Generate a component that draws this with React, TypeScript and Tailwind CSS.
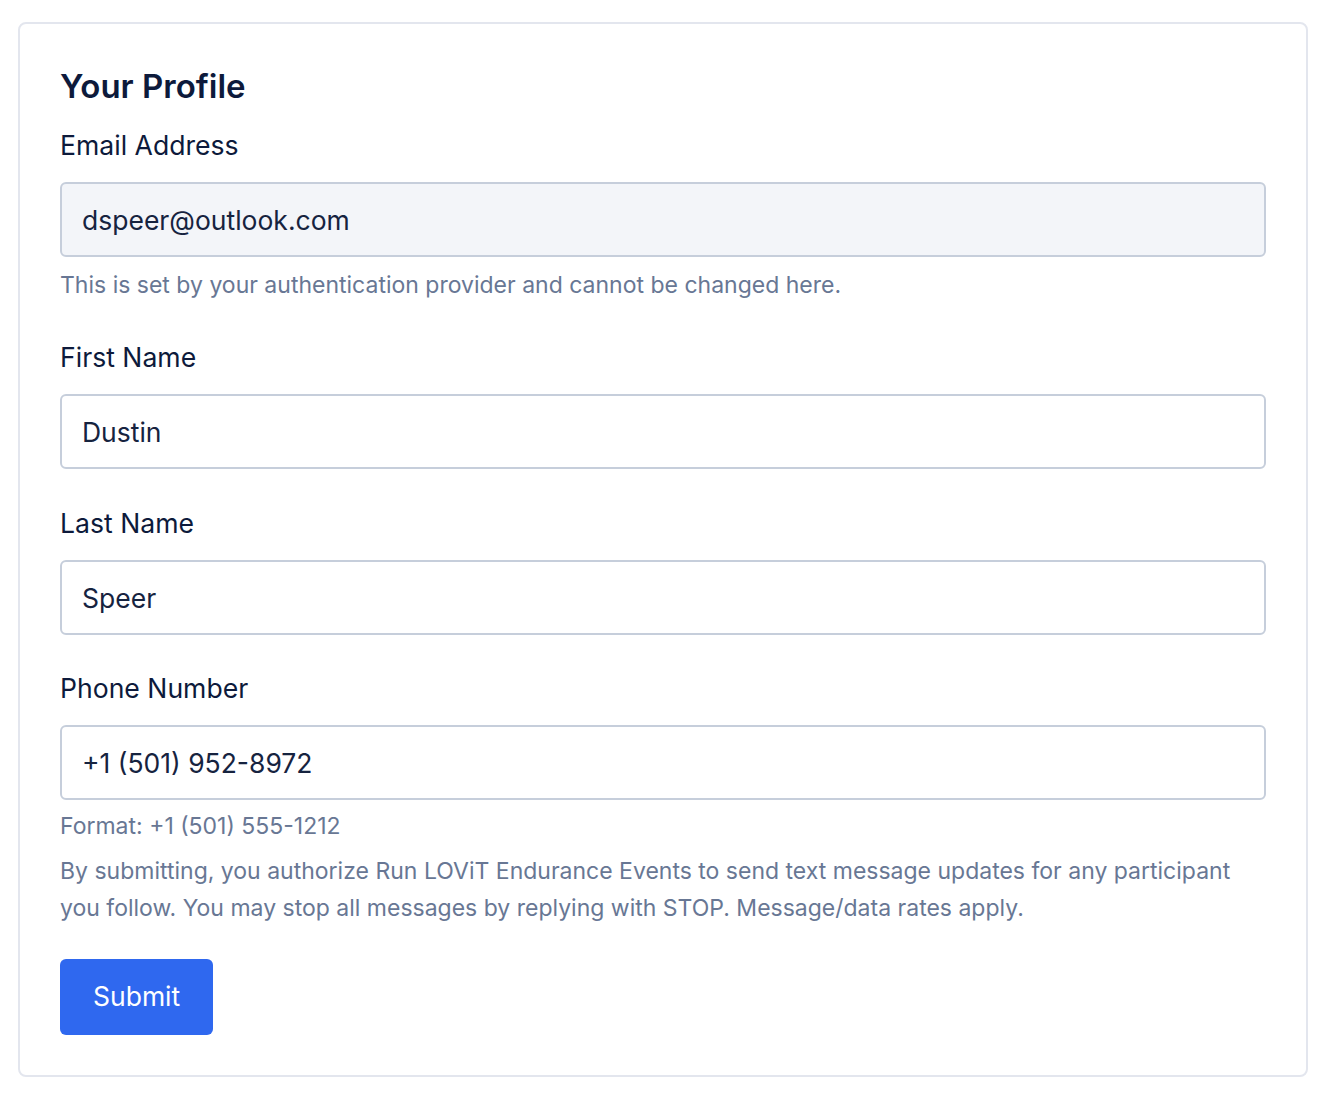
import React from "react";

const font = { fontFamily: "Inter, 'Noto Sans', sans-serif" };

function Field({ label, value, disabled }: { label: string; value: string; disabled?: boolean }) {
  return (
    <div className="flex flex-col">
      <label className="text-[26.6px] leading-[38px] text-[#0d1a3b]">{label}</label>
      <input
        readOnly
        value={value}
        className={`mt-[18px] h-[75px] w-full rounded-[6px] border-2 border-[#c6cedb] px-[20px] text-[26.5px] text-[#16233f] outline-none ${disabled ? "bg-[#f3f5f9]" : "bg-white"}`}
        style={font}
      />
    </div>
  );
}

export default function App() {
  return (
    <div className="min-h-[1104px] bg-white pt-[22px] pl-[18px] pr-[20px]" style={font}>
      <div className="rounded-[8px] border-2 border-[#e3e6ee] bg-white px-[40px] pt-[40px] pb-[40px]">
        <h1 className="text-[33px] leading-[44px] font-semibold text-[#0d1a3b]">Your Profile</h1>
        <div className="mt-[18px]">
          <Field label="Email Address" value="dspeer@outlook.com" disabled />
          <p className="mt-[11px] text-[23px] leading-[34px] text-[#687794]">
            This is set by your authentication provider and cannot be changed here.
          </p>
        </div>
        <div className="mt-[36px]">
          <Field label="First Name" value="Dustin" />
        </div>
        <div className="mt-[35px]">
          <Field label="Last Name" value="Speer" />
        </div>
        <div className="mt-[34px]">
          <Field label="Phone Number" value="+1 (501) 952-8972" />
          <p className="mt-[9px] text-[23px] leading-[34px] text-[#687794]">Format: +1 (501) 555-1212</p>
          <p className="mt-[10px] text-[23px] leading-[37px] text-[#687794]">
            By submitting, you authorize Run LOViT Endurance Events to send text message updates for any participant you follow. You may stop all messages by replying with STOP. Message/data rates apply.
          </p>
        </div>
        <button className="mt-[32px] h-[76px] rounded-[6px] bg-[#2f68ef] px-[33px] text-[26.5px] text-white">
          Submit
        </button>
      </div>
    </div>
  );
}
